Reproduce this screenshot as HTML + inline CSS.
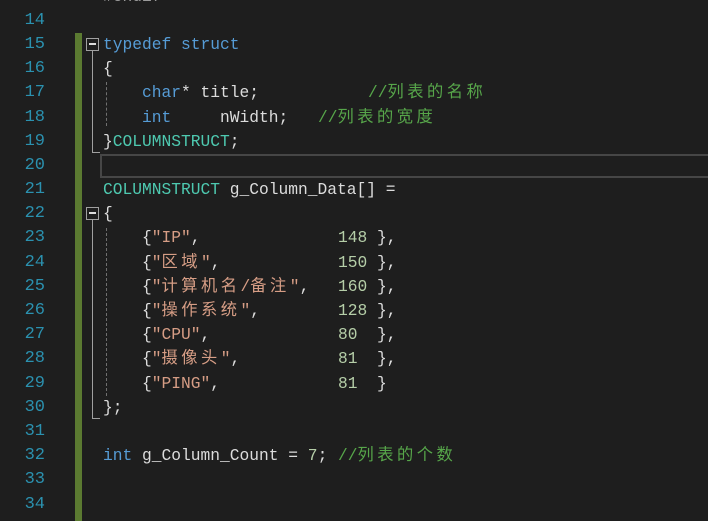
<!DOCTYPE html>
<html><head><meta charset="utf-8"><style>
body{margin:0;width:708px;height:521px;background:#1e1e1e;overflow:hidden;position:relative;font-family:"Liberation Mono","Noto Sans CJK SC",monospace;font-size:16.25px;color:#dcdcdc}
.l{position:absolute;left:103px;height:24px;line-height:24px;white-space:pre}
.n{position:absolute;left:0;width:45px;text-align:right;height:24px;line-height:24px;color:#2b91af;font-size:17px}
.k{color:#569cd6}.t{color:#4ec9b0}.s{color:#d69d85}.m{color:#b5cea8}.c{color:#57a64a}
.a{position:absolute;height:24px;line-height:24px;white-space:pre}
.z{letter-spacing:3.5px}
</style></head><body>
<div style="position:absolute;left:75px;top:33px;width:7px;height:488px;background:#5b7a31"></div>
<div style="position:absolute;left:100px;top:154px;width:610px;height:20px;border:2px solid #464646"></div>
<div style="position:absolute;left:86px;top:38px;width:11px;height:11px;border:1px solid #a0a0a0;background:#1e1e1e"></div>
<div style="position:absolute;left:89px;top:43px;width:7px;height:2px;background:#dcdcdc"></div>
<div style="position:absolute;left:92px;top:51px;width:1px;height:101px;background:#a0a0a0"></div>
<div style="position:absolute;left:92px;top:152px;width:8px;height:1px;background:#a0a0a0"></div>
<div style="position:absolute;left:86px;top:207px;width:11px;height:11px;border:1px solid #a0a0a0;background:#1e1e1e"></div>
<div style="position:absolute;left:89px;top:212px;width:7px;height:2px;background:#dcdcdc"></div>
<div style="position:absolute;left:92px;top:220px;width:1px;height:198px;background:#a0a0a0"></div>
<div style="position:absolute;left:92px;top:418px;width:8px;height:1px;background:#a0a0a0"></div>
<div style="position:absolute;left:106px;top:82px;width:0;height:44px;border-left:1px dashed #707070"></div>
<div style="position:absolute;left:106px;top:228px;width:0;height:168px;border-left:1px dashed #707070"></div>

<div class="n" style="top:-15px">13</div><div class="l" style="top:-15px;color:#9b9b9b">#endif</div>
<div class="n" style="top:9px">14</div>
<div class="n" style="top:33px">15</div><div class="l k" style="top:33px">typedef struct</div>
<div class="n" style="top:57px">16</div><div class="l" style="top:57px">{</div>
<div class="n" style="top:81px">17</div><div class="l" style="top:81px">    <span class="k">char</span>* title;</div><div class="a c" style="left:368px;top:81px">//<span class="z">列表的名称</span></div>
<div class="n" style="top:106px">18</div><div class="l" style="top:106px">    <span class="k">int</span>     nWidth;</div><div class="a c" style="left:318px;top:106px">//<span class="z">列表的宽度</span></div>
<div class="n" style="top:130px">19</div><div class="l" style="top:130px">}<span class="t">COLUMNSTRUCT</span>;</div>
<div class="n" style="top:154px">20</div>
<div class="n" style="top:178px">21</div><div class="l" style="top:178px"><span class="t">COLUMNSTRUCT</span> g_Column_Data[] =</div>
<div class="n" style="top:202px">22</div><div class="l" style="top:202px">{</div>

<div class="n" style="top:226px">23</div><div class="l" style="top:226px;left:142px">{<span class="s">"IP"</span>,</div>
<div class="n" style="top:251px">24</div><div class="l" style="top:251px;left:142px">{<span class="s">"<span class="z">区域</span>"</span>,</div>
<div class="n" style="top:275px">25</div><div class="l" style="top:275px;left:142px">{<span class="s">"<span class="z">计算机名</span>/<span class="z">备注</span>"</span>,</div>
<div class="n" style="top:299px">26</div><div class="l" style="top:299px;left:142px">{<span class="s">"<span class="z">操作系统</span>"</span>,</div>
<div class="n" style="top:323px">27</div><div class="l" style="top:323px;left:142px">{<span class="s">"CPU"</span>,</div>
<div class="n" style="top:347px">28</div><div class="l" style="top:347px;left:142px">{<span class="s">"<span class="z">摄像头</span>"</span>,</div>
<div class="n" style="top:372px">29</div><div class="l" style="top:372px;left:142px">{<span class="s">"PING"</span>,</div>
<div class="a" style="left:338px;top:226px"><span class="m">148</span> },</div>
<div class="a" style="left:338px;top:251px"><span class="m">150</span> },</div>
<div class="a" style="left:338px;top:275px"><span class="m">160</span> },</div>
<div class="a" style="left:338px;top:299px"><span class="m">128</span> },</div>
<div class="a" style="left:338px;top:323px"><span class="m">80</span>  },</div>
<div class="a" style="left:338px;top:347px"><span class="m">81</span>  },</div>
<div class="a" style="left:338px;top:372px"><span class="m">81</span>  }</div>
<div class="n" style="top:396px">30</div><div class="l" style="top:396px">};</div>
<div class="n" style="top:420px">31</div>
<div class="n" style="top:444px">32</div><div class="l" style="top:444px"><span class="k">int</span> g_Column_Count = <span class="m">7</span>; </div><div class="a c" style="left:338px;top:444px">//<span class="z">列表的个数</span></div>
<div class="n" style="top:468px">33</div>
<div class="n" style="top:493px">34</div>
</body></html>
